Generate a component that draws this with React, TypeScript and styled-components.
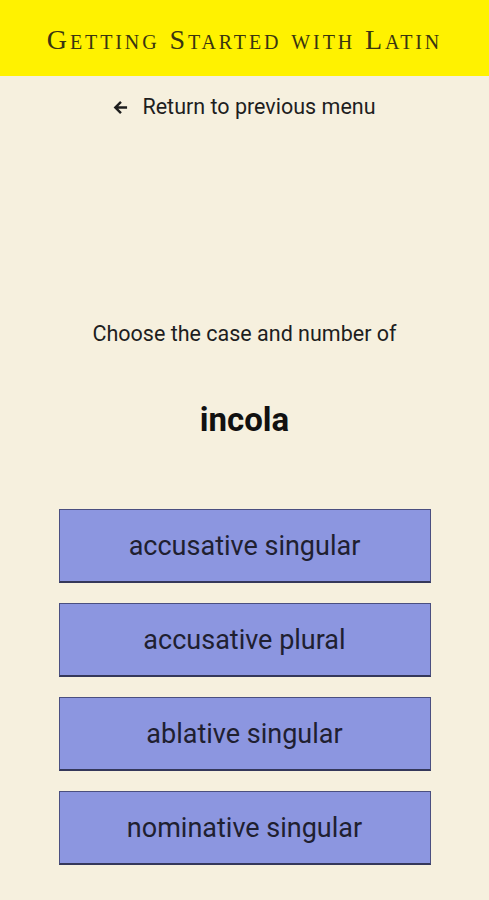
import React from "react";
import styled, { createGlobalStyle } from "styled-components";

const Global = createGlobalStyle`
  html, body { margin: 0; padding: 0; background: #f6f0de; }
  body { font-family: Roboto, "Noto Sans", sans-serif; }
`;

const Page = styled.div`
  width: 489px;
  min-height: 900px;
  background: #f6f0de;
  display: flex;
  flex-direction: column;
  align-items: center;
`;

const Header = styled.header`
  width: 100%;
  height: 76px;
  background: #fff200;
  display: flex;
  align-items: center;
  justify-content: center;
`;

const Title = styled.h1`
  margin: 0;
  padding-top: 4px;
  font-family: "Liberation Serif", "DejaVu Serif", serif;
  font-weight: 400;
  font-size: 28px;
  font-variant: small-caps;
  letter-spacing: 2.9px;
  color: #3a3510;
  white-space: nowrap;
`;

const BackLink = styled.a`
  margin-top: 19px;
  display: flex;
  align-items: center;
  gap: 14px;
  font-size: 21.5px;
  line-height: 24px;
  color: #1e1e1e;
  text-decoration: none;
  cursor: pointer;
`;

const Prompt = styled.p`
  margin: 202px 0 0;
  font-size: 21.5px;
  line-height: 26px;
  color: #1e1e1e;
  text-align: center;
`;

const Word = styled.h2`
  margin: 54px 0 0;
  font-size: 33px;
  line-height: 38px;
  font-weight: 700;
  color: #111;
`;

const Options = styled.div`
  margin-top: 70px;
  display: flex;
  flex-direction: column;
  gap: 20px;
`;

const Option = styled.button`
  width: 372px;
  height: 74px;
  box-sizing: border-box;
  background: #8c96e0;
  border: 1px solid #4a4f80;
  border-bottom: 2px solid #35385a;
  font-family: Roboto, "Noto Sans", sans-serif;
  font-size: 27px;
  color: #202030;
  cursor: pointer;
  padding: 0;
`;

const options = [
  "accusative singular",
  "accusative plural",
  "ablative singular",
  "nominative singular",
];

export default function App() {
  return (
    <>
      <Global />
      <Page>
        <Header>
          <Title>Getting Started with Latin</Title>
        </Header>
        <BackLink>
          <svg width="15" height="15" viewBox="0 0 16 16">
            <path
              d="M15 8H2.5M8.5 2L2.5 8l6 6"
              stroke="#1e1e1e"
              strokeWidth="2.6"
              fill="none"
            />
          </svg>
          Return to previous menu
        </BackLink>
        <Prompt>Choose the case and number of</Prompt>
        <Word>incola</Word>
        <Options>
          {options.map((o) => (
            <Option key={o}>{o}</Option>
          ))}
        </Options>
      </Page>
    </>
  );
}
